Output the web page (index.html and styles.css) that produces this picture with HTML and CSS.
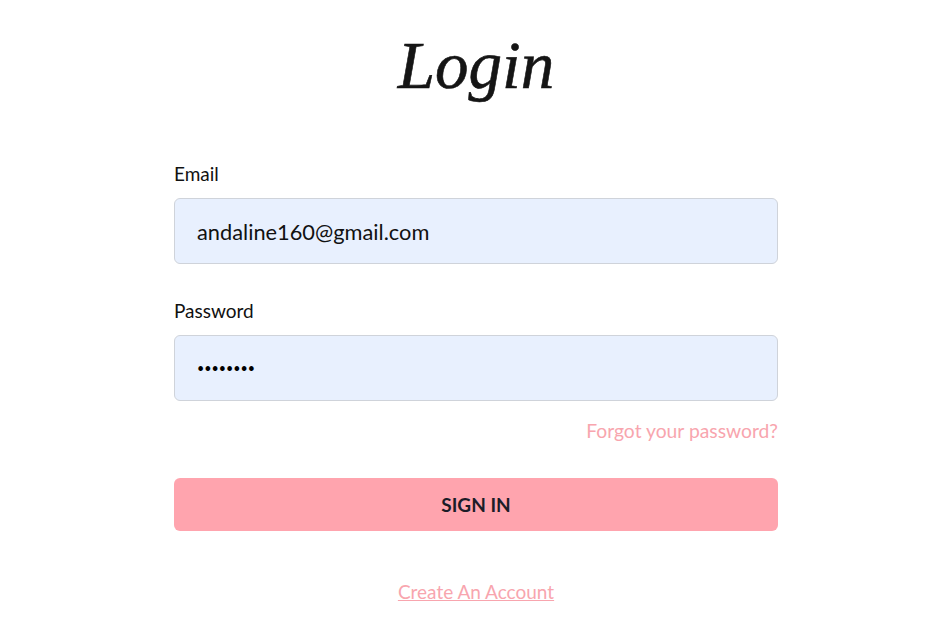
FILE: index.html
```html
<!DOCTYPE html>
<html lang="en">
<head>
<meta charset="utf-8">
<title>Login</title>
<link rel="stylesheet" href="styles.css">
</head>
<body>
<main class="page">
  <form class="login">
    <h1 class="title">Login</h1>
    <label class="label" for="email">Email</label>
    <div class="field" id="email">andaline160@gmail.com</div>
    <label class="label label-pw" for="pw">Password</label>
    <div class="field field-pw" id="pw">••••••••</div>
    <div class="forgot-row"><a class="forgot" href="#">Forgot your password?</a></div>
    <button type="button" class="signin">SIGN IN</button>
    <div class="create-row"><a class="create" href="#">Create An Account</a></div>
  </form>
</main>
</body>
</html>
```

FILE: styles.css
```css
html, body {
  margin: 0;
  padding: 0;
  background: #ffffff;
}
body {
  font-family: "Lato", "Noto Sans", sans-serif;
  color: #111111;
}
.page {
  padding-left: 26px;
}
.login {
  width: 604px;
  margin: 0 auto;
  display: flex;
  flex-direction: column;
}
.title {
  margin: 23px 0 0;
  font-family: "Liberation Serif", serif;
  font-style: italic;
  font-weight: normal;
  font-size: 67px;
  line-height: 84px;
  text-align: center;
  color: #151515;
  -webkit-text-stroke: 0.6px #151515;
}
.label {
  margin-top: 55px;
  font-size: 19px;
  line-height: 24px;
  color: #111111;
}
.label-pw {
  margin-top: 35px;
}
.field {
  margin-top: 12px;
  box-sizing: border-box;
  height: 66px;
  border: 1px solid #cfd3da;
  border-radius: 6px;
  background: #e8f0fe;
  padding: 0 22px;
  display: flex;
  align-items: center;
  font-size: 21.8px;
  color: #111111;
}
.field-pw {
  font-size: 12.5px;
  letter-spacing: 0;
  color: #000000;
}
.forgot-row {
  margin-top: 18px;
  display: flex;
  justify-content: flex-end;
}
.forgot {
  font-size: 19.3px;
  line-height: 24px;
  color: #f8a5ae;
  text-decoration: none;
}
.signin {
  margin-top: 35px;
  height: 53px;
  border: none;
  border-radius: 6px;
  background: #ffa4ae;
  font-family: inherit;
  font-size: 19px;
  font-weight: bold;
  color: #1c1c28;
  cursor: pointer;
}
.create-row {
  margin-top: 49px;
  display: flex;
  justify-content: center;
}
.create {
  font-size: 19px;
  line-height: 24px;
  color: #f8a5ae;
  text-decoration: underline;
}
```
